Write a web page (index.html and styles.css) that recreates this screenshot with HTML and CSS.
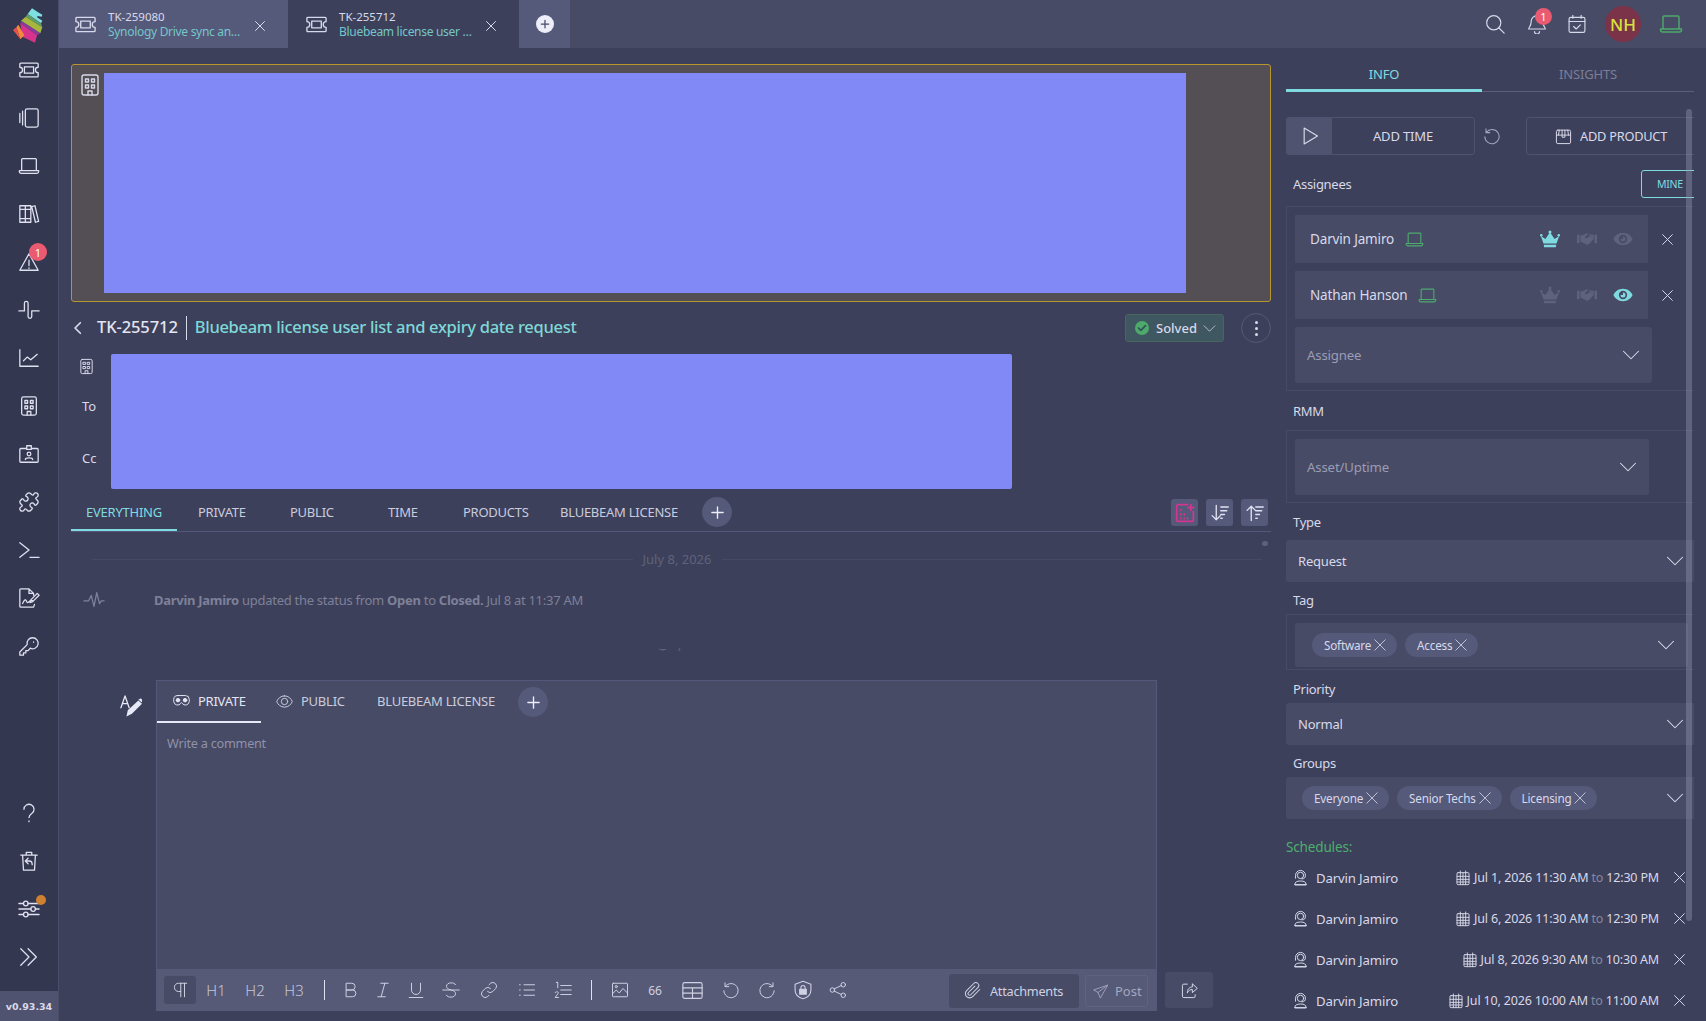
FILE: index.html
```html
<!DOCTYPE html>
<html lang="en">
<head>
    <meta charset="UTF-8">
    <meta name="viewport" content="width=device-width, initial-scale=1.0">
    <title>TK-255712 Bluebeam license user list and expiry date request</title>
    <link rel="stylesheet" href="styles.css">
</head>
<body>

    <svg class="icon-defs" xmlns="http://www.w3.org/2000/svg">
        <symbol id="i-ticket" viewBox="0 0 24 24"><path d="M3 4.5h18a1 1 0 0 1 1 1V9a3 3 0 0 0 0 6v3.5a1 1 0 0 1-1 1H3a1 1 0 0 1-1-1V15a3 3 0 0 0 0-6V5.5a1 1 0 0 1 1-1z"/><rect x="7" y="8.5" width="10" height="7"/></symbol>
        <symbol id="i-cards" viewBox="0 0 24 24"><rect x="8" y="2" width="14" height="20" rx="2"/><path d="M5 4.5v15M2 7v10"/></symbol>
        <symbol id="i-laptop" viewBox="0 0 24 24"><path d="M5 4h14a1 1 0 0 1 1 1v12H4V5a1 1 0 0 1 1-1zM1.500 17h21v1a2 2 0 0 1-2 2h-17a2 2 0 0 1-2-2z"/></symbol>
        <symbol id="i-books" viewBox="0 0 24 24"><path d="M2 3h6v18H2zM8 3h6v18H8zM2 7h12M2 17h12M15 4l3.500-1 4 17-3.500 1z"/></symbol>
        <symbol id="i-alert" viewBox="0 0 24 24"><path d="M12 3L2 21h20zM12 10v6M12 18.500v.5"/></symbol>
        <symbol id="i-pulse" viewBox="0 0 24 24"><path d="M1 13h6V4.500a2 2 0 0 1 4 0V19a2 2 0 0 0 4 0v-6h8"/></symbol>
        <symbol id="i-chart" viewBox="0 0 24 24"><path d="M2 3v18h20M6 15l4-4 4 3 7-6"/></symbol>
        <symbol id="i-building" viewBox="0 0 24 24"><rect x="4" y="2" width="16" height="20" rx="2"/><path d="M7.500 6h3v3h-3zM13.500 6h3v3h-3zM7.500 12h3v3h-3zM13.500 12h3v3h-3zM10 22v-4h4v4"/></symbol>
        <symbol id="i-contact" viewBox="0 0 24 24"><rect x="2" y="6" width="20" height="15" rx="1"/><rect x="9.500" y="3" width="5" height="4" fill="#343750"/><circle cx="12" cy="12" r="2"/><path d="M8 18c0-2.500 8-2.500 8 0"/></symbol>
        <symbol id="i-puzzle" viewBox="0 0 24 24"><path d="M19.439 7.85c-.049.322.059.648.289.878l1.568 1.568c.47.47.706 1.087.706 1.704s-.235 1.233-.706 1.704l-1.611 1.611a.98.98 0 0 1-.837.276c-.47-.07-.802-.48-.968-.925a2.501 2.501 0 1 0-3.214 3.214c.446.166.855.497.925.968a.979.979 0 0 1-.276.837l-1.61 1.61a2.404 2.404 0 0 1-1.705.707 2.402 2.402 0 0 1-1.704-.706l-1.568-1.568a1.026 1.026 0 0 0-.877-.29c-.493.074-.84.504-1.02.968a2.5 2.5 0 1 1-3.237-3.237c.464-.18.894-.527.967-1.02a1.026 1.026 0 0 0-.289-.877l-1.568-1.568A2.402 2.402 0 0 1 1.998 12c0-.617.236-1.234.706-1.704L4.23 8.77c.24-.24.581-.353.917-.303.515.077.877.528 1.073 1.01a2.5 2.5 0 1 0 3.259-3.259c-.482-.196-.933-.558-1.01-1.073-.05-.336.062-.676.303-.917l1.525-1.525A2.402 2.402 0 0 1 12 1.998c.617 0 1.234.236 1.704.706l1.568 1.568c.23.23.556.338.877.29.493-.074.84-.504 1.02-.968a2.5 2.5 0 1 1 3.237 3.237c-.464.18-.894.527-.967 1.02Z"/></symbol>
        <symbol id="i-terminal" viewBox="0 0 24 24"><path d="M2 4l10 8-10 8M13 20h10"/></symbol>
        <symbol id="i-signed" viewBox="0 0 24 24"><path d="M17 9V7l-5-5H3a1 1 0 0 0-1 1v18a1 1 0 0 0 1 1h14l1-3M12 2v5h5M5 18c2-4 3-5 4-3s1 3 3 1 2-1 4-1M14 14l7-7 2 2-7 7-3 1z"/></symbol>
        <symbol id="i-key" viewBox="0 0 24 24"><path d="M16 3a6 6 0 1 1-2.600 11.400L11 17H8.500v2.500H6V22H2v-3.500l8-8A6 6 0 0 1 16 3zM17 7.500v.5"/></symbol>
        <symbol id="i-help" viewBox="0 0 24 24"><path d="M6.500 8a5.500 5.500 0 1 1 8.500 4.600c-2 1.300-3 2-3 4.400M12 20.500v1"/></symbol>
        <symbol id="i-trash" viewBox="0 0 24 24"><path d="M3 5.500h18M5 5.500l1 16.500h12l1-16.500M9 5.500V2.500h6v3M15.500 16c0-3-1.500-4-3-4H8.500M11 9l-3 3 3 3"/></symbol>
        <symbol id="i-sliders" viewBox="0 0 24 24"><path d="M1 6h5M11 6h12M1 12h13M19 12h4M1 18h5M11 18h12"/><circle cx="8.500" cy="6" r="2.500"/><circle cx="16.500" cy="12" r="2.500"/><circle cx="8.500" cy="18" r="2.500"/></symbol>
        <symbol id="i-expand" viewBox="0 0 24 24"><path d="M3 3l9 9-9 9M11 3l9 9-9 9"/></symbol>
        <symbol id="i-close" viewBox="0 0 24 24"><path d="M3 3l18 18M21 3L3 21"/></symbol>
        <symbol id="i-down" viewBox="0 0 24 24"><path d="M2 7l10 10L22 7"/></symbol>
        <symbol id="i-back" viewBox="0 0 24 24"><path d="M16 3l-9 9 9 9"/></symbol>
        <symbol id="i-plus" viewBox="0 0 24 24"><path d="M12 3v18M3 12h18"/></symbol>
        <symbol id="i-search" viewBox="0 0 24 24"><circle cx="10.500" cy="10.500" r="8.500"/><path d="M16.500 16.500l6.500 6.500"/></symbol>
        <symbol id="i-bell" viewBox="0 0 24 24"><path d="M12 2a7 7 0 0 0-7 7c0 6-3 7-3 9h20c0-2-3-3-3-9a7 7 0 0 0-7-7zM9 21a3 3 0 0 0 6 0"/></symbol>
        <symbol id="i-calcheck" viewBox="0 0 24 24"><rect x="2.500" y="4" width="19" height="18" rx="2"/><path d="M2.500 9h19M7 1.500V5M17 1.500V5M8 15l3 3 5-5"/></symbol>
        <symbol id="i-play" viewBox="0 0 24 24"><path d="M5 2.500l16 9.500-16 9.500z"/></symbol>
        <symbol id="i-undo" viewBox="0 0 24 24"><path d="M4.500 7a9.500 9.500 0 1 1-2 6M4 2.500V7.500h5"/></symbol>
        <symbol id="i-redo" viewBox="0 0 24 24"><path d="M19.500 7a9.500 9.500 0 1 0 2 6M20 2.500V7.500h-5"/></symbol>
        <symbol id="i-box" viewBox="0 0 24 24"><rect x="2" y="3" width="20" height="19" rx="2"/><path d="M2 10h20M6 3L5 10M18 3l1 7M10 3v10h4V3"/></symbol>
        <symbol id="i-crown" viewBox="0 0 24 24"><path fill="currentColor" stroke="none" d="M5 22h14l.5-3h-15zM4.200 17.500h15.600L23 8.500l-5.500 3.500L12 4 6.500 12 1 8.500z"/><circle cx="12" cy="3.500" r="1.800" fill="currentColor" stroke="none"/><circle cx="1.500" cy="7.500" r="1.500" fill="currentColor" stroke="none"/><circle cx="22.500" cy="7.500" r="1.500" fill="currentColor" stroke="none"/></symbol>
        <symbol id="i-shake" viewBox="0 0 24 24"><path fill="currentColor" stroke="none" d="M0 7h3v10H0zM21 7h3v10h-3zM4 8l4-1 3.500-2 2 1-4 4 1.500 1.500 4-3L20 12l-6 6.500-2 .5-8-4zM14.500 5.500L17 7h3v5l-5-4.500z"/></symbol>
        <symbol id="i-eye" viewBox="0 0 24 24"><path fill="currentColor" stroke="none" fill-rule="evenodd" d="M12 4.500C6.500 4.500 2.500 8 .5 12c2 4 6 7.500 11.500 7.500S21.500 16 23.500 12c-2-4-6-7.500-11.500-7.500zM12 7a5 5 0 1 1 0 10 5 5 0 0 1 0-10z"/><path fill="currentColor" stroke="none" d="M12 9a3 3 0 1 1-3 3h3z"/></symbol>
        <symbol id="i-agent" viewBox="0 0 24 24"><circle cx="12" cy="9" r="4.500"/><path d="M5 13V9a7 7 0 0 1 14 0c0 3-1.500 5-5 5M4 22c0-4 3-5 8-5s8 1 8 5zM4 22h16"/></symbol>
        <symbol id="i-calendar" viewBox="0 0 24 24"><rect x="3" y="4" width="18" height="18" rx="1.500"/><path d="M3 9.500h18M3 14h18M3 18h18M8 4v18M12 4v18M16 4v18M8 1.500V4M16 1.500V4"/></symbol>
        <symbol id="i-mask" viewBox="0 0 24 24"><path d="M6.500 5h11A5.500 5.500 0 0 1 23 10.500v3a5.500 5.500 0 0 1-10 2.500l-1-1-1 1a5.500 5.500 0 0 1-10-2.500v-3A5.500 5.500 0 0 1 6.500 5z"/><circle cx="7" cy="11.500" r="2.500" fill="currentColor"/><circle cx="17" cy="11.500" r="2.500" fill="currentColor"/></symbol>
        <symbol id="i-outline-eye" viewBox="0 0 24 24"><path d="M12 4C6.500 4 2.500 8 1 12c1.500 4 5.500 8 11 8s9.500-4 11-8c-1.500-4-5.500-8-11-8z"/><circle cx="12" cy="12" r="4.500"/></symbol>
        <symbol id="i-writer" viewBox="0 0 24 24"><path d="M1 14L5.500 1 10 14M3 9.500h5"/><path fill="currentColor" stroke="none" d="M20 6l4 3.500-11 11-6 3 1.500-7zM21 4.500a2 2 0 0 1 3 .5l.5 2-1 1-3.500-3z"/></symbol>
        <symbol id="i-para" viewBox="0 0 24 24"><path d="M21 3H10a5.500 5.500 0 0 0 0 11h3M13 3v18M18 3v18"/></symbol>
        <symbol id="i-bold" viewBox="0 0 24 24"><path d="M6 3h7a4.500 4.500 0 0 1 0 9H6zM6 12h8a4.500 4.500 0 0 1 0 9H6z"/></symbol>
        <symbol id="i-italic" viewBox="0 0 24 24"><path d="M9 3h10M5 21h10M14.500 3l-5 18"/></symbol>
        <symbol id="i-under" viewBox="0 0 24 24"><path d="M6 3v9a6 6 0 0 0 12 0V3M3 22h18"/></symbol>
        <symbol id="i-strike" viewBox="0 0 24 24"><path d="M18 5c-1-2-3-2.500-6-2.500S6 4 6 7c0 2 1.500 4 6 5 4 1 6 2 6 5 0 3-3 4.500-6 4.500S7 21 6 19M1 12h22"/></symbol>
        <symbol id="i-link" viewBox="0 0 24 24"><path d="M10 14a5 5 0 0 0 7 0l4-4a5 5 0 0 0-7-7l-2 2M14 10a5 5 0 0 0-7 0l-4 4a5 5 0 0 0 7 7l2-2"/></symbol>
        <symbol id="i-ul" viewBox="0 0 24 24"><path d="M8 5h14M8 12h14M8 19h14M2 5h1M2 12h1M2 19h1"/></symbol>
        <symbol id="i-ol" viewBox="0 0 24 24"><path d="M9 6h14M9 12h14M9 18h14M3 2l2-.5V9M1.500 15.500c1-2 5-1.500 4 1L1.500 22h4.500"/></symbol>
        <symbol id="i-image" viewBox="0 0 24 24"><rect x="2" y="3" width="20" height="18" rx="1"/><path d="M2 17l5-5 4 4 5-6 6 6"/><circle cx="7" cy="7.500" r="1.500"/></symbol>
        <symbol id="i-table" viewBox="0 0 24 24"><rect x="1" y="3" width="22" height="18" rx="2"/><path d="M1 9h22M1 15h22M12 9v12"/></symbol>
        <symbol id="i-shield" viewBox="0 0 24 24"><path d="M12 1.500l9.500 3.500v7c0 5-4 9-9.500 10.500C6.500 21 2.500 17 2.500 12V5z"/><rect x="8" y="11" width="8" height="6" fill="currentColor"/><path d="M9.500 11V9a2.500 2.500 0 0 1 5 0v2"/></symbol>
        <symbol id="i-share" viewBox="0 0 24 24"><circle cx="4.500" cy="12" r="3"/><circle cx="19" cy="5" r="3"/><circle cx="19" cy="19" r="3"/><path d="M7 10.500l9.500-4.500M7 13.500l9.500 4.500"/></symbol>
        <symbol id="i-clip" viewBox="0 0 24 24"><path d="M21 10l-9.500 9.500a5.500 5.500 0 0 1-8-8L13 2a3.800 3.800 0 0 1 5.500 5.500L9 17a2 2 0 0 1-3-3l8.500-8.500"/></symbol>
        <symbol id="i-send" viewBox="0 0 24 24"><path d="M23 2L1 9.500l7 4 3.500 8.500zM23 2L8 13.500"/></symbol>
        <symbol id="i-shareout" viewBox="0 0 24 24"><path d="M9 3H4a2 2 0 0 0-2 2v15a2 2 0 0 0 2 2h14a2 2 0 0 0 2-2v-2M9 15c0-5 3-8 7-8V2.500l7 6.500-7 6v-4.500c-3 0-5 1.500-7 4.500z"/></symbol>
        <symbol id="i-sortdown" viewBox="0 0 24 24"><path d="M7 2v19M1.500 15.500L7 21l5.500-5.500M13 4h10M13 9h8M13 14h5M13 19h2"/></symbol>
        <symbol id="i-sortup" viewBox="0 0 24 24"><path d="M7 22V3M1.500 8.500L7 3l5.500 5.500M13 4h10M13 9h8M13 14h5M13 19h2"/></symbol>
        <symbol id="i-spark" viewBox="0 0 24 24"><path d="M15 2H4a2 2 0 0 0-2 2v16a2 2 0 0 0 2 2h16a2 2 0 0 0 2-2V10M7 8v1M7 13v1M7 18v1M11 13v1M11 18v1M15 18v1M19 2v7M15.500 5.500h7"/></symbol>
        <symbol id="i-logo" viewBox="0 0 132 144">
            <path fill="#7edfe2" d="M62 42L75 25l17 11 14 8-2 6-12-2-2 4 16 10-4 8z"/>
            <path fill="#5f9e6a" d="M56 50l6-8 40 28 4 12z"/>
            <path fill="#a5b83d" d="M42 62l14-12 50 32-6 18z"/>
            <path fill="#8b3a9e" d="M40 70l2-8 58 38-10 6z"/>
            <path fill="#d8338c" d="M40 70l50 36-6 22-38-18z"/>
            <path fill="#f08a3c" d="M28 82l6-8 18 32-12 12z"/>
            <path fill="#e5524f" d="M18 90l10-8 12 36z"/>
        </symbol>
    </svg>

    <div class="app">

        <nav class="sidebar">
            <div class="logo"><svg class="logo-mark"><use href="#i-logo"/></svg></div>
            <a class="nav-item"><svg class="ico"><use href="#i-ticket"/></svg></a>
            <a class="nav-item"><svg class="ico"><use href="#i-cards"/></svg></a>
            <a class="nav-item"><svg class="ico"><use href="#i-laptop"/></svg></a>
            <a class="nav-item"><svg class="ico"><use href="#i-books"/></svg></a>
            <a class="nav-item"><svg class="ico"><use href="#i-alert"/></svg><span class="count nav-count">1</span></a>
            <a class="nav-item"><svg class="ico"><use href="#i-pulse"/></svg></a>
            <a class="nav-item"><svg class="ico"><use href="#i-chart"/></svg></a>
            <a class="nav-item"><svg class="ico"><use href="#i-building"/></svg></a>
            <a class="nav-item"><svg class="ico"><use href="#i-contact"/></svg></a>
            <a class="nav-item"><svg class="ico"><use href="#i-puzzle"/></svg></a>
            <a class="nav-item"><svg class="ico"><use href="#i-terminal"/></svg></a>
            <a class="nav-item"><svg class="ico"><use href="#i-signed"/></svg></a>
            <a class="nav-item"><svg class="ico"><use href="#i-key"/></svg></a>
            <div class="nav-spacer"></div>
            <a class="nav-item"><svg class="ico"><use href="#i-help"/></svg></a>
            <a class="nav-item"><svg class="ico"><use href="#i-trash"/></svg></a>
            <a class="nav-item"><svg class="ico"><use href="#i-sliders"/></svg><span class="nav-dot"></span></a>
            <a class="nav-item"><svg class="ico"><use href="#i-expand"/></svg></a>
            <div class="version">v0.93.34</div>
        </nav>

        <div class="main">

            <header class="topbar">
                <div class="top-tab top-tab-other">
                    <svg class="top-tab-ico"><use href="#i-ticket"/></svg>
                    <div class="top-tab-text">
                        <div class="top-tab-id">TK-259080</div>
                        <div class="top-tab-title">Synology Drive sync an…</div>
                    </div>
                    <svg class="top-tab-x"><use href="#i-close"/></svg>
                </div>
                <div class="top-tab top-tab-current">
                    <svg class="top-tab-ico"><use href="#i-ticket"/></svg>
                    <div class="top-tab-text">
                        <div class="top-tab-id">TK-255712</div>
                        <div class="top-tab-title">Bluebeam license user …</div>
                    </div>
                    <svg class="top-tab-x"><use href="#i-close"/></svg>
                </div>
                <div class="top-add"><span class="top-add-dot"><svg class="top-add-plus"><use href="#i-plus"/></svg></span></div>
                <div class="top-actions">
                    <svg class="top-ico top-search"><use href="#i-search"/></svg>
                    <span class="top-bell"><svg class="top-ico"><use href="#i-bell"/></svg><span class="count bell-count">1</span></span>
                    <svg class="top-ico top-cal"><use href="#i-calcheck"/></svg>
                    <span class="avatar">NH</span>
                    <svg class="top-ico top-laptop"><use href="#i-laptop"/></svg>
                </div>
            </header>

            <div class="workspace">

                <section class="ticket">
                    <div class="banner">
                        <svg class="banner-ico"><use href="#i-building"/></svg>
                        <div class="redacted banner-block"></div>
                    </div>

                    <div class="ticket-head">
                        <svg class="back"><use href="#i-back"/></svg>
                        <span class="ticket-id">TK-255712</span>
                        <span class="ticket-title">Bluebeam license user list and expiry date request</span>
                        <span class="status"><span class="status-dot"><svg viewBox="0 0 24 24"><path d="M6 12l4 4 8-8"/></svg></span>Solved<svg class="status-down"><use href="#i-down"/></svg></span>
                        <span class="kebab"><i></i><i></i><i></i></span>
                    </div>

                    <div class="recipients">
                        <div class="recipient-labels">
                            <svg class="recipient-ico"><use href="#i-building"/></svg>
                            <span class="recipient-to">To</span>
                            <span class="recipient-cc">Cc</span>
                        </div>
                        <div class="redacted recipient-block"></div>
                    </div>

                    <div class="feed-tabs">
                        <span class="feed-tab feed-tab-on">EVERYTHING</span>
                        <span class="feed-tab feed-tab-private">PRIVATE</span>
                        <span class="feed-tab feed-tab-public">PUBLIC</span>
                        <span class="feed-tab feed-tab-time">TIME</span>
                        <span class="feed-tab feed-tab-products">PRODUCTS</span>
                        <span class="feed-tab feed-tab-license">BLUEBEAM LICENSE</span>
                        <span class="round-add"><svg><use href="#i-plus"/></svg></span>
                        <span class="feed-tools">
                            <span class="feed-tool feed-tool-pink"><svg><use href="#i-spark"/></svg></span>
                            <span class="feed-tool"><svg><use href="#i-sortdown"/></svg></span>
                            <span class="feed-tool"><svg><use href="#i-sortup"/></svg></span>
                        </span>
                    </div>

                    <div class="feed">
                        <span class="feed-mark"></span>
                        <div class="day-line"><span>July 8, 2026</span></div>
                        <div class="activity">
                            <svg class="activity-ico" viewBox="0 0 24 24"><path d="M1 13h5l3-6 3 12 3-15 3 12 2-3h3"/></svg>
                            <p><b>Darvin Jamiro</b> updated the status from <b>Open</b> to <b>Closed.</b> Jul 8 at 11:37 AM</p>
                        </div>
                        <div class="day-today">Today</div>
                    </div>

                    <div class="compose-row">
                        <svg class="compose-mark"><use href="#i-writer"/></svg>
                        <div class="composer">
                            <div class="composer-tabs">
                                <span class="composer-tab composer-tab-on"><svg><use href="#i-mask"/></svg>PRIVATE</span>
                                <span class="composer-tab composer-tab-public"><svg><use href="#i-outline-eye"/></svg>PUBLIC</span>
                                <span class="composer-tab composer-tab-license">BLUEBEAM LICENSE</span>
                                <span class="round-add"><svg><use href="#i-plus"/></svg></span>
                            </div>
                            <div class="composer-body">Write a comment</div>
                            <div class="toolbar">
                                <span class="tool tool-32 tool-on"><svg><use href="#i-para"/></svg></span>
                                <span class="tool tool-40 tool-h">H1</span>
                                <span class="tool tool-38 tool-h">H2</span>
                                <span class="tool tool-40 tool-h">H3</span>
                                <span class="tool-sep"></span>
                                <span class="tool tool-32"><svg><use href="#i-bold"/></svg></span>
                                <span class="tool tool-32"><svg><use href="#i-italic"/></svg></span>
                                <span class="tool tool-34"><svg><use href="#i-under"/></svg></span>
                                <span class="tool tool-36"><svg><use href="#i-strike"/></svg></span>
                                <span class="tool tool-40"><svg><use href="#i-link"/></svg></span>
                                <span class="tool tool-36"><svg><use href="#i-ul"/></svg></span>
                                <span class="tool tool-36"><svg><use href="#i-ol"/></svg></span>
                                <span class="tool-sep"></span>
                                <span class="tool tool-36"><svg><use href="#i-image"/></svg></span>
                                <span class="tool tool-34 tool-quote">66</span>
                                <span class="tool tool-40"><svg class="tool-table"><use href="#i-table"/></svg></span>
                                <span class="tool tool-38"><svg><use href="#i-undo"/></svg></span>
                                <span class="tool tool-34"><svg><use href="#i-redo"/></svg></span>
                                <span class="tool tool-38"><svg class="tool-shield"><use href="#i-shield"/></svg></span>
                                <span class="tool tool-32"><svg><use href="#i-share"/></svg></span>
                                <span class="attach"><svg><use href="#i-clip"/></svg>Attachments</span>
                                <span class="post"><svg><use href="#i-send"/></svg>Post</span>
                            </div>
                        </div>
                        <span class="share-out"><svg><use href="#i-shareout"/></svg></span>
                    </div>
                </section>

                <aside class="panel">
                    <div class="panel-tabs">
                        <span class="panel-tab panel-tab-on">INFO</span>
                        <span class="panel-tab">INSIGHTS</span>
                    </div>

                    <div class="panel-actions">
                        <span class="add-time"><span class="add-time-play"><svg><use href="#i-play"/></svg></span><span class="add-time-label">ADD TIME</span></span>
                        <svg class="reset"><use href="#i-undo"/></svg>
                        <span class="add-product"><svg><use href="#i-box"/></svg>ADD PRODUCT</span>
                    </div>

                    <div class="assignee-head">
                        <span class="field-label">Assignees</span>
                        <span class="mine">MINE</span>
                    </div>
                    <div class="field-box assignee-box">
                        <div class="assignee-line">
                            <div class="assignee">
                                <span class="assignee-name">Darvin Jamiro</span>
                                <svg class="status-laptop"><use href="#i-laptop"/></svg>
                                <span class="role-icons">
                                    <svg class="role-on"><use href="#i-crown"/></svg>
                                    <svg><use href="#i-shake"/></svg>
                                    <svg><use href="#i-eye"/></svg>
                                </span>
                            </div>
                            <svg class="remove"><use href="#i-close"/></svg>
                        </div>
                        <div class="assignee-line">
                            <div class="assignee">
                                <span class="assignee-name">Nathan Hanson</span>
                                <svg class="status-laptop"><use href="#i-laptop"/></svg>
                                <span class="role-icons">
                                    <svg><use href="#i-crown"/></svg>
                                    <svg><use href="#i-shake"/></svg>
                                    <svg class="role-on"><use href="#i-eye"/></svg>
                                </span>
                            </div>
                            <svg class="remove"><use href="#i-close"/></svg>
                        </div>
                        <div class="pick pick-assignee"><span>Assignee</span><svg><use href="#i-down"/></svg></div>
                    </div>

                    <div class="field-label label-rmm">RMM</div>
                    <div class="field-box rmm-box">
                        <div class="pick pick-rmm"><span>Asset/Uptime</span><svg><use href="#i-down"/></svg></div>
                    </div>

                    <div class="field-label label-type">Type</div>
                    <div class="select"><span>Request</span><svg><use href="#i-down"/></svg></div>

                    <div class="field-label label-tag">Tag</div>
                    <div class="field-box tag-box">
                        <div class="tag-input">
                            <span class="chip">Software<svg><use href="#i-close"/></svg></span>
                            <span class="chip">Access<svg><use href="#i-close"/></svg></span>
                            <svg class="tag-down"><use href="#i-down"/></svg>
                        </div>
                    </div>

                    <div class="field-label label-priority">Priority</div>
                    <div class="select select-tight"><span>Normal</span><svg><use href="#i-down"/></svg></div>

                    <div class="field-label label-groups">Groups</div>
                    <div class="select select-tight select-groups">
                        <span class="chip">Everyone<svg><use href="#i-close"/></svg></span>
                        <span class="chip">Senior Techs<svg><use href="#i-close"/></svg></span>
                        <span class="chip">Licensing<svg><use href="#i-close"/></svg></span>
                        <svg class="groups-down"><use href="#i-down"/></svg>
                    </div>

                    <div class="schedules-label">Schedules:</div>
                    <div class="schedule">
                        <svg class="schedule-agent"><use href="#i-agent"/></svg>
                        <span class="schedule-name">Darvin Jamiro</span>
                        <svg class="schedule-cal"><use href="#i-calendar"/></svg>
                        <span class="schedule-time">Jul 1, 2026 11:30 AM <em>to</em> 12:30 PM</span>
                        <svg class="schedule-x"><use href="#i-close"/></svg>
                    </div>
                    <div class="schedule">
                        <svg class="schedule-agent"><use href="#i-agent"/></svg>
                        <span class="schedule-name">Darvin Jamiro</span>
                        <svg class="schedule-cal"><use href="#i-calendar"/></svg>
                        <span class="schedule-time">Jul 6, 2026 11:30 AM <em>to</em> 12:30 PM</span>
                        <svg class="schedule-x"><use href="#i-close"/></svg>
                    </div>
                    <div class="schedule">
                        <svg class="schedule-agent"><use href="#i-agent"/></svg>
                        <span class="schedule-name">Darvin Jamiro</span>
                        <svg class="schedule-cal"><use href="#i-calendar"/></svg>
                        <span class="schedule-time">Jul 8, 2026 9:30 AM <em>to</em> 10:30 AM</span>
                        <svg class="schedule-x"><use href="#i-close"/></svg>
                    </div>
                    <div class="schedule">
                        <svg class="schedule-agent"><use href="#i-agent"/></svg>
                        <span class="schedule-name">Darvin Jamiro</span>
                        <svg class="schedule-cal"><use href="#i-calendar"/></svg>
                        <span class="schedule-time">Jul 10, 2026 10:00 AM <em>to</em> 11:00 AM</span>
                        <svg class="schedule-x"><use href="#i-close"/></svg>
                    </div>

                    <div class="panel-scroll"></div>
                </aside>

            </div>
        </div>
    </div>

</body>
</html>
```

FILE: styles.css
```css
* {
    box-sizing: border-box;
}
html, body {
    margin: 0;
    height: 100%;
    overflow: hidden;
}
body {
    font-family: "Noto Sans", sans-serif;
    font-size: 14px;
    color: #d8d9ea;
    background-color: #3d405a;
}
svg {
    fill: none;
    stroke: currentColor;
    stroke-width: 1.4;
    stroke-linecap: round;
    stroke-linejoin: round;
    flex: none;
}
.icon-defs {
    display: none;
}
.app {
    display: flex;
    width: 1706px;
    height: 1021px;
}

/* left nav */
.sidebar {
    width: 59px;
    flex: none;
    display: flex;
    flex-direction: column;
    background-color: #343750;
    border-right: 1px solid #4a4d68;
}
.logo {
    height: 46px;
    display: flex;
    align-items: flex-start;
    justify-content: center;
}
.logo-mark {
    width: 44px;
    height: 48px;
    stroke: none;
}
.nav-item {
    position: relative;
    height: 48px;
    flex: none;
    display: flex;
    align-items: center;
    justify-content: center;
    color: #e0e1f0;
}
.ico {
    width: 22px;
    height: 22px;
}
.count {
    position: absolute;
    display: flex;
    align-items: center;
    justify-content: center;
    border-radius: 50%;
    background-color: #ea5a70;
    color: #fff;
    font-size: 11px;
}
.nav-count {
    width: 18px;
    height: 18px;
    left: 29px;
    top: 5px;
}
.nav-dot {
    position: absolute;
    width: 10px;
    height: 10px;
    border-radius: 50%;
    background-color: #d0812f;
    left: 36px;
    top: 10px;
}
.nav-spacer {
    flex: 1;
}
.version {
    height: 30px;
    margin-top: 10px;
    display: flex;
    align-items: center;
    justify-content: center;
    background-color: #50536f;
    font-family: "DejaVu Sans", sans-serif;
    font-weight: bold;
    font-size: 9.5px;
}

.main {
    flex: 1;
    min-width: 0;
    display: flex;
    flex-direction: column;
}

/* top tabs */
.topbar {
    height: 48px;
    flex: none;
    display: flex;
    background-color: #474b66;
}
.top-tab {
    display: flex;
    align-items: center;
    padding-left: 15px;
}
.top-tab-other {
    width: 229px;
    background-color: #55597a;
}
.top-tab-current {
    width: 231px;
    padding-left: 17px;
    background-color: #3d405a;
}
.top-tab-ico {
    width: 23px;
    height: 23px;
    margin-right: 11px;
}
.top-tab-text {
    width: 133px;
    font-size: 11.5px;
    line-height: 15px;
}
.top-tab-id {
    color: #d8d9ea;
}
.top-tab-title {
    color: #74c7c9;
    font-size: 12px;
    letter-spacing: -0.3px;
    white-space: nowrap;
}
.top-tab-x {
    width: 12px;
    height: 12px;
    margin-left: 13px;
    margin-top: 3px;
    stroke-width: 2;
}
.top-add {
    width: 51px;
    display: flex;
    align-items: center;
    justify-content: center;
    background-color: #55597a;
}
.top-add-dot {
    width: 18px;
    height: 18px;
    border-radius: 50%;
    background-color: #eeeefa;
    display: flex;
    align-items: center;
    justify-content: center;
    color: #474b66;
}
.top-add-plus {
    width: 10px;
    height: 10px;
    stroke-width: 3;
}
.top-actions {
    margin-left: auto;
    display: flex;
    align-items: center;
    padding-right: 23px;
}
.top-ico {
    width: 20px;
    height: 20px;
    display: block;
}
.top-bell {
    position: relative;
    margin-left: 22px;
}
.bell-count {
    width: 17px;
    height: 17px;
    top: -6px;
    left: 8px;
}
.top-cal {
    margin-left: 20px;
}
.avatar {
    width: 36px;
    height: 36px;
    margin-left: 18px;
    border-radius: 50%;
    background-color: #7a3349;
    color: #d9e23d;
    font-size: 17px;
    font-weight: 500;
    display: flex;
    align-items: center;
    justify-content: center;
}
.top-laptop {
    width: 24px;
    height: 24px;
    margin-left: 18px;
    color: #4eaa6d;
}

.workspace {
    flex: 1;
    min-height: 0;
    display: flex;
}

/* ticket column */
.ticket {
    width: 1200px;
    margin-left: 12px;
    flex: none;
    padding-top: 16px;
}
.redacted {
    background-color: #8189f7;
}
.banner {
    height: 238px;
    display: flex;
    padding: 8px 0 8px 32px;
    position: relative;
    background-color: #544f54;
    border: 1px solid #b7952f;
    border-radius: 3px;
}
.banner-ico {
    position: absolute;
    left: 6px;
    top: 8px;
    width: 24px;
    height: 24px;
}
.banner-block {
    width: 1082px;
}
.ticket-head {
    height: 30px;
    margin-top: 11px;
    display: flex;
    align-items: center;
}
.back {
    width: 14px;
    height: 14px;
    stroke-width: 3;
}
.ticket-id {
    margin-left: 12px;
    padding: 0 8px 3px 0;
    font-size: 16.5px;
    font-weight: 500;
    line-height: 21px;
    letter-spacing: -0.1px;
    border-right: 1px solid #d8d9ea;
    color: #e4e5f2;
}
.ticket-title {
    margin: -4px 0 0 8px;
    font-size: 16.5px;
    font-weight: 500;
    letter-spacing: -0.3px;
    color: #7fd8d8;
}
.status {
    margin-left: auto;
    width: 99px;
    height: 28px;
    display: flex;
    align-items: center;
    padding-left: 9px;
    font-size: 13px;
    font-weight: 500;
    background-color: #3f5760;
    border: 1px solid #47665f;
    border-radius: 3px;
}
.status-dot {
    width: 14px;
    height: 14px;
    margin-right: 7px;
    border-radius: 50%;
    background-color: #4daa6b;
    color: #33545a;
    display: flex;
}
.status-dot svg {
    stroke-width: 3;
}
.status-down {
    width: 13px;
    height: 13px;
    margin-left: 6px;
}
.kebab {
    width: 30px;
    height: 30px;
    margin-left: 17px;
    border: 1px solid #55587a;
    border-radius: 50%;
    display: flex;
    flex-direction: column;
    align-items: center;
    justify-content: center;
    gap: 3px;
}
.kebab i {
    width: 3px;
    height: 3px;
    border-radius: 50%;
    background-color: #d8d9ea;
}
.recipients {
    height: 135px;
    margin-top: 11px;
    display: flex;
}
.recipient-labels {
    width: 40px;
    display: flex;
    flex-direction: column;
    align-items: flex-start;
    padding-left: 11px;
    font-size: 13px;
}
.recipient-ico {
    width: 17px;
    height: 17px;
    margin: 4px 0 0 -4px;
}
.recipient-to {
    margin-top: 22px;
}
.recipient-cc {
    margin-top: 34px;
}
.recipient-block {
    width: 901px;
    border-radius: 2px;
}

/* feed tabs */
.feed-tabs {
    position: relative;
    height: 43px;
    padding-top: 8px;
    border-bottom: 1px solid #55587a;
    font-size: 13px;
    letter-spacing: -0.25px;
    color: #c9cbdf;
}
.feed-tab {
    position: absolute;
    top: 13px;
    line-height: 20px;
}
.feed-tab-on {
    left: 0;
    width: 106px;
    height: 29px;
    text-align: center;
    color: #7fdbe0;
    border-bottom: 2px solid #7fdbe0;
}
.feed-tab-private { left: 127px; }
.feed-tab-public { left: 219px; }
.feed-tab-time { left: 317px; }
.feed-tab-products { left: 392px; }
.feed-tab-license { left: 489px; }
.round-add {
    position: absolute;
    width: 30px;
    height: 30px;
    border-radius: 50%;
    background-color: #55597a;
    color: #eeeefa;
    display: flex;
    align-items: center;
    justify-content: center;
}
.round-add svg {
    width: 15px;
    height: 15px;
    stroke-width: 2.2;
}
.feed-tabs .round-add {
    left: 631px;
    top: 8px;
}
.feed-tools {
    position: absolute;
    right: 3px;
    top: 10px;
    display: flex;
    gap: 8px;
}
.feed-tool {
    width: 27px;
    height: 27px;
    border-radius: 3px;
    background-color: #55597a;
    display: flex;
    align-items: center;
    justify-content: center;
    color: #e0e1f0;
}
.feed-tool svg {
    width: 18px;
    height: 18px;
    stroke-width: 1.8;
}
.feed-tool-pink {
    color: #d4368f;
}
.feed-tool-pink svg {
    width: 20px;
    height: 20px;
    stroke-width: 2;
}

/* activity feed */
.feed {
    position: relative;
    height: 119px;
    overflow: hidden;
    color: #7e8199;
}
.feed-mark {
    position: absolute;
    right: 3px;
    top: 9px;
    width: 6px;
    height: 5px;
    border-radius: 3px;
    background-color: #5d607e;
}
.day-line {
    display: flex;
    align-items: center;
    gap: 10px;
    margin: 18px 9px 0 21px;
    font-size: 13px;
    color: #5f627c;
}
.day-line::before,
.day-line::after {
    content: "";
    flex: 1;
    height: 1px;
    background-color: #474a65;
}
.activity {
    display: flex;
    align-items: center;
    margin-top: 22px;
    height: 20px;
}
.activity-ico {
    width: 22px;
    height: 22px;
    margin-left: 12px;
}
.activity p {
    margin: 0 0 0 49px;
    font-size: 13px;
    letter-spacing: -0.28px;
}
.activity b {
    font-weight: 700;
}
.day-today {
    margin: 34px 9px 0 21px;
    text-align: center;
    font-size: 13px;
    color: #5f627c;
}

/* comment box */
.compose-row {
    display: flex;
    margin-top: 29px;
}
.compose-mark {
    width: 22px;
    height: 24px;
    margin: 14px 0 0 49px;
    color: #e8e9f6;
}
.composer {
    width: 1001px;
    height: 331px;
    margin-left: 14px;
    display: flex;
    flex-direction: column;
    background-color: #474b66;
    border: 1px solid #55587a;
    border-bottom: none;
}
.composer-tabs {
    position: relative;
    height: 42px;
    font-size: 13px;
    letter-spacing: -0.25px;
    flex: none;
}
.composer-tab {
    position: absolute;
    top: 10px;
    display: flex;
    align-items: center;
    line-height: 20px;
    color: #c9cbdf;
}
.composer-tab svg {
    width: 17px;
    height: 17px;
    margin-right: 8px;
}
.composer-tab-on {
    left: 0;
    width: 104px;
    height: 32px;
    padding: 0 0 11px 16px;
    color: #e4e5f2;
    border-bottom: 2px solid #e8e9f6;
}
.composer-tab-public {
    left: 119px;
}
.composer-tab-license {
    left: 220px;
}
.composer-tabs .round-add {
    left: 361px;
    top: 6px;
}
.composer-body {
    flex: 1;
    padding: 11px 10px;
    font-size: 12.7px;
    letter-spacing: -0.25px;
    color: #8f92aa;
}
.toolbar {
    height: 42px;
    flex: none;
    display: flex;
    align-items: center;
    padding-left: 7px;
    background-color: #565a77;
    color: #d0d1e3;
}
.tool {
    height: 28px;
    flex: none;
    border-radius: 3px;
    display: flex;
    align-items: center;
    justify-content: center;
}
.tool-32 { width: 32px; }
.tool-34 { width: 34px; }
.tool-36 { width: 36px; }
.tool-38 { width: 38px; }
.tool-40 { width: 40px; }
.tool svg {
    width: 18px;
    height: 18px;
    stroke-width: 1.3;
}
.tool .tool-table {
    width: 21px;
    height: 21px;
}
.tool .tool-shield {
    width: 20px;
    height: 20px;
}
.tool-on {
    background-color: #474b66;
}
.tool-h {
    font-size: 15px;
    font-weight: 300;
    color: #c4c6da;
}
.tool-quote {
    font-size: 12px;
}
.tool-sep {
    width: 1px;
    height: 20px;
    margin: 0 10px;
    flex: none;
    background-color: #e0e1f0;
}
.attach {
    margin-left: auto;
    width: 130px;
    height: 34px;
    margin-top: 2px;
    display: flex;
    align-items: center;
    padding-left: 15px;
    font-size: 12.7px;
    letter-spacing: -0.25px;
    border-radius: 3px;
    background-color: #474b66;
}
.attach svg {
    width: 18px;
    height: 18px;
    margin-right: 8px;
}
.post {
    width: 63px;
    height: 32px;
    margin: 2px 8px 0 6px;
    display: flex;
    align-items: center;
    padding-left: 7px;
    font-size: 13px;
    color: #a5a7bf;
    border: 1px solid #5f6382;
    border-radius: 3px;
}
.post svg {
    width: 15px;
    height: 15px;
    margin-right: 7px;
}
.share-out {
    width: 48px;
    height: 36px;
    margin: 292px 0 0 8px;
    border-radius: 3px;
    background-color: #474b66;
    display: flex;
    align-items: center;
    justify-content: center;
    color: #d8d9ea;
}
.share-out svg {
    width: 17px;
    height: 17px;
}

/* right panel */
.panel {
    position: relative;
    width: 408px;
    height: 973px;
    margin-left: 15px;
    flex: none;
    overflow: hidden;
    font-size: 13.5px;
    letter-spacing: -0.15px;
}
.panel-tabs {
    display: flex;
    height: 44px;
    border-bottom: 1px solid #5d5f7a;
    text-align: center;
    font-size: 13px;
    color: #7b7e98;
}
.panel-tab {
    width: 212px;
    padding-top: 17px;
}
.panel-tab-on {
    width: 196px;
    color: #7fdbe0;
    height: 44px;
    border-bottom: 3px solid #7fdbe0;
}
.panel-actions {
    display: flex;
    align-items: center;
    margin-top: 25px;
    height: 38px;
}
.add-time {
    width: 189px;
    height: 38px;
    flex: none;
    display: flex;
    border: 1px solid #50536f;
    border-radius: 3px;
}
.add-time-play {
    width: 45px;
    display: flex;
    align-items: center;
    justify-content: center;
    background-color: #50536f;
}
.add-time-play svg {
    width: 20px;
    height: 20px;
}
.add-time-label {
    flex: 1;
    display: flex;
    align-items: center;
    justify-content: center;
    font-size: 13px;
}
.reset {
    width: 18px;
    height: 18px;
    margin-left: 8px;
    color: #a5a7bf;
}
.add-product {
    width: 200px;
    height: 38px;
    margin-left: 25px;
    flex: none;
    display: flex;
    align-items: center;
    padding-left: 28px;
    border: 1px solid #50536f;
    border-radius: 3px;
    font-size: 12.8px;
    letter-spacing: -0.25px;
}
.add-product svg {
    width: 17px;
    height: 17px;
    margin-right: 8px;
}
.assignee-head {
    display: flex;
    justify-content: space-between;
    align-items: center;
    height: 28px;
    margin-top: 15px;
    padding-left: 7px;
}
.mine {
    width: 60px;
    height: 28px;
    margin-right: -7px;
    display: flex;
    align-items: center;
    padding-left: 15px;
    font-size: 10.5px;
    letter-spacing: -0.3px;
    color: #7fdbe0;
    border: 1px solid #7fdbe0;
    border-radius: 3px;
}
.field-box {
    border: 1px solid #474b66;
    border-right: none;
    padding: 8px 0 8px 8px;
}
.assignee-box {
    margin-top: 8px;
    height: 185px;
}
.assignee-line {
    display: flex;
    align-items: center;
    margin-bottom: 8px;
}
.assignee {
    width: 353px;
    height: 48px;
    display: flex;
    align-items: center;
    padding-left: 15px;
    background-color: #474b66;
}
.status-laptop {
    width: 19px;
    height: 19px;
    margin-left: 11px;
    color: #4eaa6d;
}
.role-icons {
    margin-left: auto;
    margin-right: 15px;
    display: flex;
    gap: 16.5px;
    color: #5f627c;
}
.role-icons svg {
    width: 20px;
    height: 20px;
}
.role-icons .role-on {
    color: #7fdbe0;
}
.remove {
    width: 13px;
    height: 13px;
    margin-left: 13px;
    stroke-width: 1.8;
}
.pick {
    display: flex;
    align-items: center;
    justify-content: space-between;
    height: 56px;
    padding: 0 12px 0 12px;
    background-color: #474b66;
    border-radius: 3px;
    font-size: 13.2px;
    color: #9b9db5;
}
.pick svg,
.select svg {
    width: 18px;
    height: 18px;
    color: #e0e1f0;
}
.pick-assignee {
    width: 357px;
}
.pick-rmm {
    width: 354px;
}
.rmm-box {
    height: 73px;
    margin-top: 10px;
}
.field-label {
    padding-left: 7px;
    line-height: 18px;
    font-size: 13px;
    letter-spacing: -0.3px;
}
.assignee-head .field-label {
    padding-left: 0;
}
.label-rmm { margin-top: 11px; }
.label-type { margin-top: 10px; }
.label-tag { margin-top: 9px; }
.label-priority { margin-top: 10px; }
.label-groups { margin-top: 9px; }
.select {
    display: flex;
    align-items: center;
    justify-content: space-between;
    height: 42px;
    margin-top: 9px;
    padding: 0 10px 0 12px;
    background-color: #474b66;
    border-radius: 3px 0 0 3px;
    font-size: 13px;
    letter-spacing: -0.2px;
}
.select-tight {
    margin-top: 5px;
}
.tag-box {
    height: 56px;
    margin-top: 5px;
}
.tag-input {
    width: 393px;
    height: 44px;
    display: flex;
    align-items: center;
    gap: 8px;
    padding-left: 17px;
    background-color: #474b66;
    border-radius: 3px;
}
.chip {
    height: 24px;
    display: flex;
    align-items: center;
    padding: 0 10px 0 12px;
    border-radius: 12px;
    background-color: #55597a;
    font-size: 11.7px;
    letter-spacing: -0.2px;
    color: #d8d9ea;
}
.chip svg,
.select .chip svg {
    width: 14px;
    height: 14px;
    margin-left: 2px;
    stroke-width: 1.4;
    color: #d8d9ea;
}
.tag-down {
    width: 18px;
    height: 18px;
    margin-left: auto;
    margin-right: 13px;
    color: #e0e1f0;
}
.select-groups {
    justify-content: flex-start;
    gap: 8px;
    padding-left: 16px;
}
.select .groups-down {
    margin-left: auto;
}
.schedules-label {
    margin-top: 19px;
    line-height: 18px;
    color: #4caf6e;
}
.schedule {
    display: flex;
    align-items: center;
    height: 41px;
    padding-left: 6px;
}
.schedules-label + .schedule {
    margin-top: 1px;
}
.schedule-agent {
    width: 17px;
    height: 17px;
}
.schedule-name {
    margin-left: 7px;
    font-size: 13.2px;
}
.schedule-cal {
    width: 16px;
    height: 16px;
    margin-left: auto;
}
.schedule-time {
    margin-left: 3px;
    font-size: 12.5px;
    letter-spacing: -0.17px;
}
.schedule-time em {
    font-style: normal;
    color: #85889f;
}
.schedule-x {
    width: 13px;
    height: 13px;
    margin: 0 8px 0 14px;
    stroke-width: 1.8;
}
.panel-scroll {
    position: absolute;
    right: 2px;
    top: 61px;
    width: 6px;
    height: 812px;
    border-radius: 3px;
    background-color: rgba(150, 152, 180, 0.4);
}
```
